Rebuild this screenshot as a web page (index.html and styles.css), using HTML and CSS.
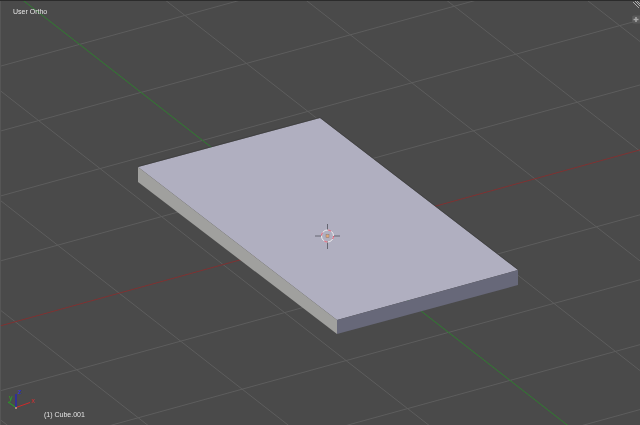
FILE: index.html
```html
<!DOCTYPE html>
<html lang="en">
<head>
<meta charset="utf-8">
<title>User Ortho</title>
<link rel="stylesheet" href="styles.css">
</head>
<body>
<main class="viewport">
  <svg class="scene" width="640" height="425" viewBox="0 0 640 425" xmlns="http://www.w3.org/2000/svg">
    <g class="grid">
      <line x1="-580.4" y1="-33.6" x2="403.4" y2="734.4"/>
      <line x1="-476.7" y1="-62.2" x2="507.3" y2="705.8"/>
      <line x1="-372.8" y1="-90.8" x2="611.2" y2="677.2"/>
      <line x1="-268.9" y1="-119.4" x2="715.1" y2="648.6"/>
      <line x1="-61.1" y1="-176.6" x2="922.9" y2="591.4"/>
      <line x1="42.8" y1="-205.2" x2="1026.8" y2="562.8"/>
      <line x1="146.7" y1="-233.8" x2="1130.7" y2="534.2"/>
      <line x1="250.6" y1="-262.4" x2="1234.6" y2="505.6"/>
      <line x1="-646" y1="244" x2="808" y2="-156"/>
      <line x1="-584.5" y1="292" x2="869.5" y2="-108"/>
      <line x1="-523" y1="340" x2="931" y2="-60"/>
      <line x1="-461.5" y1="388" x2="992.5" y2="-12"/>
      <line x1="-338.5" y1="484" x2="1115.5" y2="84"/>
      <line x1="-277" y1="532" x2="1177" y2="132"/>
      <line x1="-215.5" y1="580" x2="1238.5" y2="180"/>
      <line x1="-154" y1="628" x2="1300" y2="228"/>
    </g>
    <line class="axis-green" x1="-167" y1="-148" x2="817" y2="620"/>
    <line class="axis-red" x1="-400" y1="436" x2="1054" y2="36"/>

    <polygon class="plate-top" points="138,167 320,118 518,270 337,320"/>
    <polygon class="plate-left" points="138,167 337,320 337,334 138,182"/>
    <polygon class="plate-front" points="337,320 518,270 518,285 337,334"/>
    <path class="plate-edge" d="M138 166.500L320 117.500L518 269.500"/>

    <g class="cursor">
      <path class="cursor-cross" d="M315 236H322M333 236H340M327.500 224V230M327.500 241V249"/>
      <circle class="cursor-ring-white" cx="327.500" cy="236" r="6"/>
      <circle class="cursor-ring-red" cx="327.500" cy="236" r="6"/>
      <rect class="cursor-dot" x="326" y="234.500" width="3" height="3"/>
    </g>

    <g class="gizmo">
      <line class="gizmo-green" x1="16" y1="407.500" x2="8" y2="402"/>
      <line class="gizmo-red" x1="16" y1="407.500" x2="30" y2="402.500"/>
      <line class="gizmo-blue" x1="16" y1="407.500" x2="16" y2="394"/>
      <circle class="gizmo-origin" cx="16" cy="408" r="1"/>
    </g>

    <path class="corner-hatch" d="M633 2L639 8M635 1L640 6M637 1L640 4"/>
    <path class="tab" d="M640 15.500H634Q632 15.500 632 17.500V21.500Q632 23.500 634 23.500H640Z"/>
    <path class="tab-plus" d="M636 17V22M633.500 19.500H638.500"/>
  </svg>

  <span class="label label-view">User Ortho</span>
  <span class="label label-object">(1) Cube.001</span>
  <span class="axis-letter letter-x">x</span>
  <span class="axis-letter letter-y">y</span>
  <span class="axis-letter letter-z">z</span>
</main>
</body>
</html>
```

FILE: styles.css
```css
html, body {
  margin: 0;
  padding: 0;
  background: #4a4a4a;
}

.viewport {
  position: relative;
  width: 640px;
  height: 425px;
  overflow: hidden;
  background: #4a4a4a;
}

.viewport::after {
  content: "";
  position: absolute;
  inset: 0;
  box-shadow: inset 0 1px 0 #2b2b2b, inset 1px 0 0 #565656;
  pointer-events: none;
}

.scene {
  display: block;
  filter: blur(0.3px);
}

.grid line {
  stroke: #5d5d5d;
  stroke-width: 1;
}

.axis-green {
  stroke: #2f7d2f;
  stroke-width: 1;
}

.axis-red {
  stroke: #7f3232;
  stroke-width: 1;
}

.plate-top { fill: #b0afc0; }
.plate-left { fill: #a0a09e; }
.plate-front { fill: #676879; }

.plate-edge {
  fill: none;
  stroke: #3a3a3c;
  stroke-width: 0.6;
}

.cursor-cross {
  fill: none;
  stroke: #666672;
  stroke-width: 1;
}

.cursor-ring-white {
  fill: none;
  stroke: #eeeeee;
  stroke-width: 1;
}

.cursor-ring-red {
  fill: none;
  stroke: #e0506a;
  stroke-width: 1;
  stroke-dasharray: 3.14 6.28;
}

.cursor-dot {
  fill: #e0a878;
  stroke: #8a7a70;
  stroke-width: 0.5;
}

.gizmo-green, .gizmo-red, .gizmo-blue {
  stroke-width: 1;
}

.gizmo-green { stroke: #22a822; }
.gizmo-red { stroke: #d02a2a; }
.gizmo-blue { stroke: #1818e0; }
.gizmo-origin { fill: #c8a080; }

.corner-hatch {
  fill: none;
  stroke: #c4c4c4;
  stroke-width: 0.8;
}

.tab { fill: #5a5a5a; }

.tab-plus {
  fill: none;
  stroke: #a8a8a8;
  stroke-width: 1.500;
}

.label {
  position: absolute;
  font-family: "Liberation Sans", Arial, sans-serif;
  font-size: 7px;
  line-height: 8px;
  color: #e4e4e4;
  white-space: nowrap;
  filter: blur(0.2px);
}

.label-view {
  left: 13px;
  top: 8px;
}

.label-object {
  left: 44px;
  top: 411px;
}

.axis-letter {
  position: absolute;
  font-family: "Liberation Sans", Arial, sans-serif;
  font-size: 7px;
  line-height: 7px;
}

.letter-x { left: 31px; top: 397px; color: #d02a2a; }
.letter-y { left: 9px; top: 394px; color: #22a822; }
.letter-z { left: 18px; top: 388px; color: #2a2ae0; }
```
